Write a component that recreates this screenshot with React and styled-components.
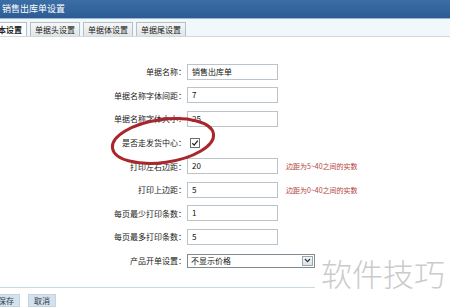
import React from "react";
import styled, { createGlobalStyle } from "styled-components";

const Global = createGlobalStyle`
  html, body { margin: 0; padding: 0; background: #ffffff; }
  body { font-family: "Noto Sans CJK SC", "Noto Sans", sans-serif; }
`;

const Page = styled.div`
  position: relative;
  width: 450px;
  height: 307px;
  overflow: hidden;
  background: #ffffff;
`;

const TitleBar = styled.div`
  height: 18px;
  line-height: 18px;
  padding-left: 2px;
  color: #ffffff;
  font-size: 9px;
  background: linear-gradient(#3c6fa6, #2c5c93);
  border-bottom: 1px solid #9cb8d0;
`;

const TabStrip = styled.div`
  height: 17px;
  display: flex;
  align-items: flex-end;
  gap: 3px;
  margin-left: -15px;
  background: #f1f8fc;
  border-bottom: 1px solid #d3d7d9;
`;

const Tab = styled.div`
  height: 13px;
  line-height: 13px;
  padding: 0 4px;
  font-size: 8px;
  color: #222;
  border: 1px solid #b4bfc6;
  border-bottom: none;
  background: ${(p) => (p.$active ? "#ffffff" : "linear-gradient(#f6f7f7, #e1e5e7)")};
  font-weight: ${(p) => (p.$active ? 700 : 400)};
`;

const Form = styled.div`
  padding-top: 23px;
  display: flex;
  flex-direction: column;
`;

const Row = styled.div`
  height: 23.6px;
  display: grid;
  grid-template-columns: 186px auto auto;
  align-items: center;
  justify-content: start;
`;

const Label = styled.div`
  text-align: right;
  font-size: 8px;
  color: #222;
  white-space: nowrap;
`;

const TextInput = styled.div`
  box-sizing: border-box;
  width: 91px;
  height: 16px;
  line-height: 14px;
  padding: 0 4px;
  margin-left: 1px;
  font-size: 8px;
  color: #111;
  border: 1px solid #bcc3c9;
  background: #fff;
`;

const Check = styled.div`
  box-sizing: border-box;
  width: 10px;
  height: 10px;
  margin-left: 4px;
  border: 1px solid #6e6e6e;
  background: #fff;
  display: flex;
  align-items: center;
  justify-content: center;
`;

const Hint = styled.div`
  margin-left: 8px;
  font-size: 7px;
  color: #b4423b;
  white-space: nowrap;
`;

const Select = styled.div`
  box-sizing: border-box;
  width: 128px;
  height: 14px;
  margin-left: 1px;
  display: flex;
  align-items: center;
  border: 1px solid #7f8a93;
  background: #fff;
  font-size: 8px;
  color: #111;
`;

const SelectText = styled.div`
  flex: 1;
  padding-left: 3px;
  line-height: 12px;
`;

const SelectArrow = styled.div`
  width: 11px;
  height: 10px;
  margin-right: 1px;
  box-sizing: border-box;
  border: 1px solid #9aa6b0;
  background: linear-gradient(#f4f6f8, #dde3e8);
  display: flex;
  align-items: center;
  justify-content: center;
`;

const Divider = styled.div`
  margin-top: 15px;
  width: 315px;
  border-top: 1px solid #c9d9e2;
`;

const ButtonBar = styled.div`
  margin-top: 6px;
  margin-left: -8px;
  display: flex;
  gap: 8px;
`;

const Button = styled.div`
  height: 11px;
  line-height: 11px;
  padding: 0 5px;
  font-size: 8px;
  color: #2a3a4a;
  background: #d5e1ec;
  border: 1px solid #c6d4e0;
`;

const Watermark = styled.div`
  position: absolute;
  left: 321px;
  top: 250px;
  font-size: 31px;
  font-weight: 300;
  color: #cbcbcb;
  white-space: nowrap;
`;

const Circle = styled.svg`
  position: absolute;
  left: 0;
  top: 0;
  pointer-events: none;
`;

const rows = [
  { label: "单据名称：", value: "销售出库单" },
  { label: "单据名称字体间距：", value: "7" },
  { label: "单据名称字体大小：", value: "25" },
  { label: "是否走发货中心：", check: true },
  { label: "打印左右边距：", value: "20", hint: "边距为5~40之间的实数" },
  { label: "打印上边距：", value: "5", hint: "边距为0~40之间的实数" },
  { label: "每页最少打印条数：", value: "1" },
  { label: "每页最多打印条数：", value: "5" },
];

export default function App() {
  return (
    <Page>
      <Global />
      <TitleBar>销售出库单设置</TitleBar>
      <TabStrip>
        <Tab $active>基本设置</Tab>
        <Tab>单据头设置</Tab>
        <Tab>单据体设置</Tab>
        <Tab>单据尾设置</Tab>
      </TabStrip>
      <Form>
        {rows.map((r) => (
          <Row key={r.label}>
            <Label>{r.label}</Label>
            {r.check ? (
              <Check>
                <svg width="8" height="8" viewBox="0 0 8 8">
                  <path d="M1.3 4.2 L3.2 6.1 L6.8 1.6" fill="none" stroke="#222" strokeWidth="1.3" />
                </svg>
              </Check>
            ) : (
              <TextInput>{r.value}</TextInput>
            )}
            {r.hint && <Hint>{r.hint}</Hint>}
          </Row>
        ))}
        <Row>
          <Label>产品开单设置：</Label>
          <Select>
            <SelectText>不显示价格</SelectText>
            <SelectArrow>
              <svg width="7" height="5" viewBox="0 0 7 5">
                <path d="M1 1 L3.5 3.6 L6 1" fill="none" stroke="#333" strokeWidth="1.3" />
              </svg>
            </SelectArrow>
          </Select>
        </Row>
        <Divider />
        <ButtonBar>
          <Button>保存</Button>
          <Button>取消</Button>
        </ButtonBar>
      </Form>
      <Watermark>软件技巧</Watermark>
      <Circle width="450" height="307" viewBox="0 0 450 307">
        <ellipse
          cx="163"
          cy="141"
          rx="51"
          ry="21.5"
          transform="rotate(-8 163 141)"
          fill="none"
          stroke="#a8262c"
          strokeWidth="3"
        />
      </Circle>
    </Page>
  );
}
